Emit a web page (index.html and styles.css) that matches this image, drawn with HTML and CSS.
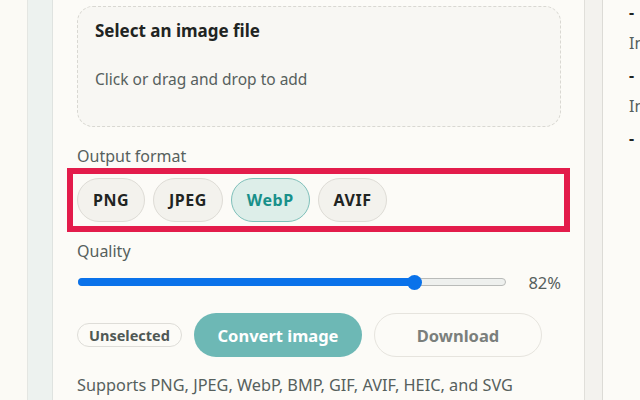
FILE: index.html
```html
<!DOCTYPE html>
<html lang="en">
<head>
<meta charset="utf-8">
<title>Image converter</title>
<link rel="stylesheet" href="styles.css">
</head>
<body>
<div class="page">
  <div class="gutter"></div>
  <div class="rail"></div>
  <main class="card">
    <div class="drop">
      <div class="drop-title">Select an image file</div>
      <div class="drop-hint">Click or drag and drop to add</div>
    </div>
    <div class="label label-format">Output format</div>
    <div class="formats">
      <button class="fmt">PNG</button>
      <button class="fmt">JPEG</button>
      <button class="fmt fmt-active">WebP</button>
      <button class="fmt">AVIF</button>
    </div>
    <div class="label label-quality">Quality</div>
    <div class="slider-row">
      <div class="track">
        <div class="fill" style="width:78.7%"></div>
        <div class="thumb" style="left:78.7%"></div>
      </div>
      <div class="pct">82%</div>
    </div>
    <div class="actions">
      <span class="badge">Unselected</span>
      <button class="btn btn-primary">Convert image</button>
      <button class="btn btn-secondary">Download</button>
    </div>
    <p class="supports">Supports PNG, JPEG, WebP, BMP, GIF, AVIF, HEIC, and SVG</p>
  </main>
  <div class="band"></div>
  <aside class="side">
    <div class="val">-</div>
    <div class="lbl">In</div>
    <div class="val">-</div>
    <div class="lbl">In</div>
    <div class="val">-</div>
  </aside>
</div>
</body>
</html>
```

FILE: styles.css
```css
* { box-sizing: border-box; }
html, body {
  margin: 0;
  padding: 0;
  width: 640px;
  height: 400px;
  overflow: hidden;
  background: #fbfaf5;
  font-family: "Noto Sans", "Liberation Sans", sans-serif;
  color: #1f2422;
}
.page {
  display: flex;
  height: 400px;
}
.gutter {
  width: 28px;
  flex: none;
  background: #fbfaf5;
  border-right: 1px solid #e4e6e2;
}
.rail {
  width: 25px;
  flex: none;
  background: #edf2ef;
  border-right: 1px solid #dfe3e0;
}
.card {
  width: 532px;
  flex: none;
  background: #fcfbf7;
  border-right: 1px solid #e0dfda;
  padding: 6px 23px 0 24px;
}
.drop {
  height: 121px;
  border: 1px dashed #d9d8d2;
  border-radius: 16px;
  background: #f8f7f3;
  padding: 13px 17px 0;
}
.drop-title {
  font-size: 17px;
  font-weight: 700;
  line-height: 22px;
  color: #1f2422;
}
.drop-hint {
  margin-top: 27px;
  font-size: 15.5px;
  line-height: 20px;
  color: #56605d;
}
.label {
  font-size: 16px;
  line-height: 20px;
  color: #56605d;
}
.label-format { margin-top: 19px; }
.formats {
  display: flex;
  gap: 8px;
  margin-top: 12px;
  height: 44px;
  outline: 6px solid #e31c4b;
  outline-offset: 4px;
  margin-right: 1px;
}
.fmt {
  height: 44px;
  padding: 0 15px;
  border-radius: 22px;
  border: 1px solid #dedcd6;
  background: #f3f2ed;
  font-family: inherit;
  font-size: 16px;
  font-weight: 700;
  letter-spacing: 0.5px;
  color: #1f2422;
}
.fmt-active {
  background: #ddeee9;
  border-color: #7fc0ba;
  color: #18908a;
}
.label-quality { margin-top: 19px; }
.slider-row {
  display: flex;
  align-items: center;
  height: 22px;
  margin-top: 10px;
}
.track {
  position: relative;
  width: 428px;
  height: 8px;
  margin-left: 1px;
  border-radius: 4px;
  background: #eef0ee;
  border: 1px solid #b9bbb9;
}
.fill {
  position: absolute;
  left: -1px;
  top: -1px;
  bottom: -1px;
  background: #0a72ea;
  border-radius: 4px 0 0 4px;
}
.thumb {
  position: absolute;
  top: 50%;
  width: 15px;
  height: 15px;
  margin: -7.5px 0 0 -7.5px;
  border-radius: 50%;
  background: #0a72ea;
}
.pct {
  margin-left: auto;
  font-size: 16.5px;
  color: #56605d;
}
.actions {
  display: flex;
  align-items: center;
  gap: 12px;
  margin-top: 20px;
}
.badge {
  width: 105px;
  height: 24px;
  text-align: center;
  border: 1px solid #deddd8;
  border-radius: 12px;
  font-size: 14.5px;
  font-weight: 700;
  line-height: 22px;
  color: #4f5855;
  background: #fcfbf7;
}
.btn {
  height: 44px;
  width: 168px;
  border-radius: 22px;
  font-family: inherit;
  font-size: 16.5px;
  font-weight: 700;
}
.btn-primary {
  background: #6db8b5;
  border: none;
  color: #ffffff;
}
.btn-secondary {
  background: #fcfbf7;
  border: 1px solid #e6e4de;
  color: #7a7f7c;
}
.supports {
  margin: 18px 0 0;
  font-size: 16.3px;
  line-height: 20px;
  color: #56605d;
  white-space: nowrap;
}
.band {
  width: 18px;
  flex: none;
  background: #f3f2ee;
  border-right: 1px solid #dcdbd6;
}
.side {
  flex: 1;
  background: #fcfbf7;
  padding: 2px 0 0 26px;
  overflow: hidden;
  white-space: nowrap;
}
.val {
  font-size: 16px;
  font-weight: 700;
  line-height: 20px;
  height: 31px;
  color: #1f2422;
}
.lbl {
  font-size: 16px;
  line-height: 20px;
  height: 32px;
  color: #56605d;
}
```
